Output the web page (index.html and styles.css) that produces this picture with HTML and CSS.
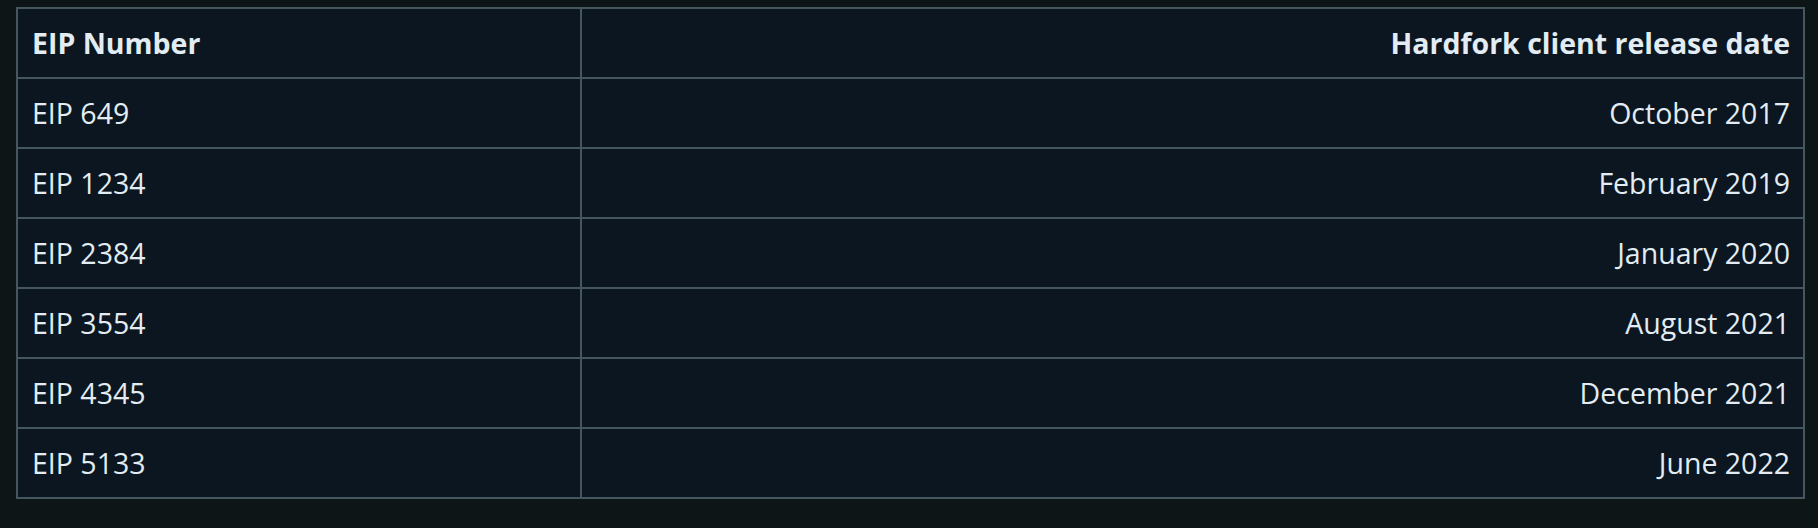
FILE: index.html
```html
<!DOCTYPE html>
<html>
<head>
<meta charset="utf-8">
<link rel="stylesheet" href="styles.css">
</head>
<body>
<div class="wrap">
<table class="eip-table">
  <thead>
    <tr><th class="c1">EIP Number</th><th class="c2">Hardfork client release date</th></tr>
  </thead>
  <tbody>
    <tr><td class="c1">EIP 649</td><td class="c2">October 2017</td></tr>
    <tr><td class="c1">EIP 1234</td><td class="c2">February 2019</td></tr>
    <tr><td class="c1">EIP 2384</td><td class="c2">January 2020</td></tr>
    <tr><td class="c1">EIP 3554</td><td class="c2">August 2021</td></tr>
    <tr><td class="c1">EIP 4345</td><td class="c2">December 2021</td></tr>
    <tr><td class="c1">EIP 5133</td><td class="c2">June 2022</td></tr>
  </tbody>
</table>
</div>
</body>
</html>
```
FILE: styles.css
```css
html, body {
  margin: 0;
  padding: 0;
  background: #0d1517;
}
.wrap {
  padding: 7px 13px 0 16px;
}
.eip-table {
  width: 1789px;
  border-collapse: collapse;
  background: #0b1620;
  font-family: "Open Sans", "Liberation Sans", sans-serif;
  font-size: 28.5px;
  color: #e2ecf2;
}
.eip-table th,
.eip-table td {
  border: 2px solid #46565d;
  padding: 15px 13px 15px 14px;
  line-height: 38px;
  height: 38px;
  box-sizing: content-box;
}
.eip-table th {
  font-weight: 700;
}
.c1 {
  width: 535px;
  text-align: left;
}
.c2 {
  text-align: right;
}
```
